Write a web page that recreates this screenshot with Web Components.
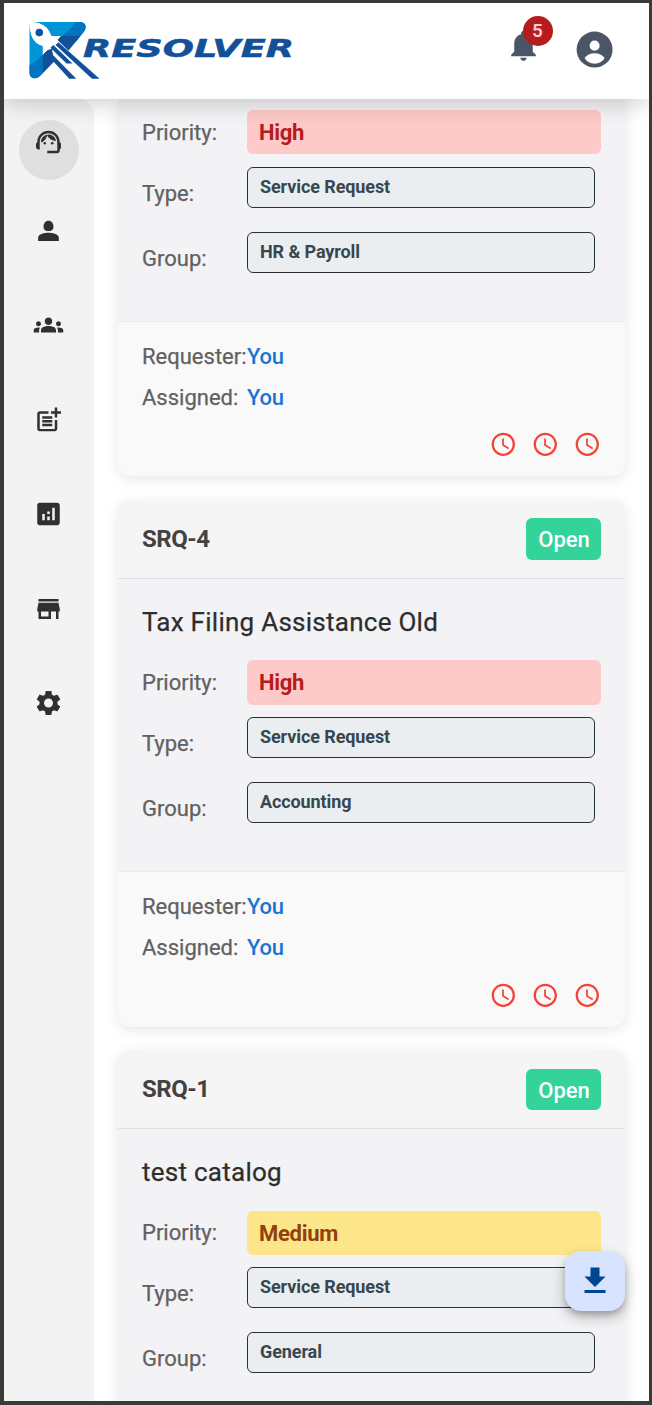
<!DOCTYPE html>
<html lang="en">
<head>
<meta charset="utf-8">
<title>Resolver</title>
<style>
html,body{margin:0;height:100%;overflow:hidden;background:#fff}
body{font-family:Roboto,"Liberation Sans",sans-serif}
</style>
</head>
<body>
<app-shell>
  <app-header slot="header" count="5"></app-header>
  <side-nav slot="nav"></side-nav>
  <ticket-card scrolled priority="High" type="Service Request" group="HR &amp; Payroll" requester="You" assigned="You"></ticket-card>
  <ticket-card code="SRQ-4" status="Open" heading="Tax Filing Assistance Old" priority="High" type="Service Request" group="Accounting" requester="You" assigned="You"></ticket-card>
  <ticket-card code="SRQ-1" status="Open" heading="test catalog" priority="Medium" type="Service Request" group="General"></ticket-card>
  <download-button slot="fab"></download-button>
</app-shell>
<script>
const ICONS = {
  agent: '<path d="M21 12.22C21 6.73 16.74 3 12 3c-4.69 0-9 3.65-9 9.28-.6.34-1 .98-1 1.72v2c0 1.1.9 2 2 2h1v-6.1c0-3.87 3.13-7 7-7s7 3.13 7 7V19h-8v2h8c1.1 0 2-.9 2-2v-1.22c.59-.31 1-.92 1-1.64v-2.3c0-.7-.41-1.31-1-1.62z"/><circle cx="9" cy="13" r="1"/><circle cx="15" cy="13" r="1"/><path d="M18 11.03C17.52 8.18 15.04 6 12.05 6c-3.03 0-6.29 2.51-6.03 6.45 2.47-1.01 4.33-3.21 4.86-5.89 1.31 2.63 4 4.44 7.12 4.47z"/>',
  person: '<path d="M12 12c2.300 0 4-1 4-3.500C16 6 14.500 3.800 12 3.800S8 6 8 8.500C8 11 9.700 12 12 12zm0 1.300c-2.670 0-8.300.900-8.300 4V20h16.600v-2.700c0-3.100-5.630-4-8.300-4z"/>',
  groups: '<path d="M12 12.75c1.63 0 3.07.39 4.24.9 1.08.48 1.76 1.56 1.76 2.73V18H6v-1.61c0-1.18.68-2.26 1.76-2.73 1.17-.52 2.61-.91 4.24-.91zM4 13c1.1 0 2-.9 2-2s-.9-2-2-2-2 .9-2 2 .9 2 2 2zm1.13 1.1c-.37-.06-.74-.1-1.13-.1-.99 0-1.93.21-2.78.58C.48 14.9 0 15.62 0 16.43V18h4.5v-1.61c0-.83.23-1.61.63-2.29zM20 13c1.1 0 2-.9 2-2s-.9-2-2-2-2 .9-2 2 .9 2 2 2zm4 3.43c0-.81-.48-1.53-1.22-1.85-.85-.37-1.79-.58-2.78-.58-.39 0-.76.04-1.13.1.4.68.63 1.46.63 2.29V18H24v-1.57zM12 6c1.66 0 3 1.34 3 3s-1.34 3-3 3-3-1.34-3-3 1.34-3 3-3z"/>',
  postAdd: '<path d="M17 19.22H5V7h7V5H5c-1.1 0-2 .9-2 2v12c0 1.1.9 2 2 2h12c1.1 0 2-.9 2-2v-7h-2v7.22z"/><path d="M19 2h-2v3h-3v2h3v3h2V7h3V5h-3V2zM7 9h8v2H7zm0 3h8v2H7zm0 3h8v2H7z"/>',
  analytics: '<path d="M19 3H5c-1.1 0-2 .9-2 2v14c0 1.1.9 2 2 2h14c1.1 0 2-.9 2-2V5c0-1.1-.9-2-2-2zM9 17H7v-5h2v5zm4 0h-2v-3h2v3zm0-5h-2v-2h2v2zm4 5h-2V7h2v10z"/>',
  store: '<path d="M20 4H4v2h16V4zm1 10v-2l-1-5H4l-1 5v2h1v6h10v-6h4v6h2v-6h1zm-9 4H6v-4h6v4z"/>',
  settings: '<path d="M19.14 12.94c.04-.3.06-.61.06-.94 0-.32-.02-.64-.07-.94l2.03-1.58c.18-.14.23-.41.12-.61l-1.92-3.32c-.12-.22-.37-.29-.59-.22l-2.39.96c-.5-.38-1.03-.7-1.62-.94l-.36-2.54c-.04-.24-.24-.41-.48-.41h-3.84c-.24 0-.43.17-.47.41l-.36 2.54c-.59.24-1.13.57-1.62.94l-2.39-.96c-.22-.08-.47 0-.59.22L2.74 8.87c-.12.21-.08.47.12.61l2.03 1.58c-.05.3-.09.63-.09.94s.02.64.07.94l-2.03 1.58c-.18.14-.23.41-.12.61l1.92 3.32c.12.22.37.29.59.22l2.39-.96c.5.38 1.03.7 1.62.94l.36 2.54c.05.24.24.41.48.41h3.84c.24 0 .44-.17.47-.41l.36-2.54c.59-.24 1.13-.56 1.62-.94l2.39.96c.22.08.47 0 .59-.22l1.92-3.32c.12-.22.07-.47-.12-.61l-2.01-1.58zM12 15.6c-1.98 0-3.6-1.62-3.6-3.6s1.62-3.6 3.6-3.6 3.6 1.62 3.6 3.6-1.62 3.6-3.6 3.6z"/>',
  clock: '<path d="M11.99 2C6.47 2 2 6.48 2 12s4.47 10 9.99 10C17.52 22 22 17.52 22 12S17.52 2 11.99 2zM12 20c-4.42 0-8-3.58-8-8s3.58-8 8-8 8 3.58 8 8-3.58 8-8 8z"/><path d="M12.5 7H11v6l5.25 3.15.75-1.23-4.5-2.67z"/>',
  bell: '<path d="M12 22c1.1 0 2-.9 2-2h-4c0 1.1.89 2 2 2zm6-6v-5c0-3.07-1.64-5.64-4.5-6.32V4c0-.83-.67-1.5-1.5-1.5s-1.5.67-1.5 1.5v.68C7.63 5.36 6 7.92 6 11v5l-2 2v1h16v-1l-2-2z"/>',
  account: '<path fill-rule="evenodd" d="M12 2a10 10 0 1 0 0 20 10 10 0 0 0 0-20zM12 7a2.8 2.8 0 1 1 0 5.6A2.8 2.8 0 0 1 12 7zM6.4 16.7C7.6 15 9.6 14.1 12 14.1s4.4.9 5.6 2.6C16.4 18.7 14.4 19.8 12 19.8s-4.4-1.1-5.6-3.1z"/>',
  download: '<path d="M5 20h14v-2H5v2zM19 9h-4V3H9v6H5l7 7 7-7z"/>'
};
function define(name, render) {
  customElements.define(name, class extends HTMLElement {
    connectedCallback() {
      if (this.shadowRoot) return;
      const t = document.createElement('template');
      t.innerHTML = render(this);
      this.attachShadow({mode: 'open'}).append(t.content.cloneNode(true));
    }
  });
}
const esc = s => (s || '').replace(/&/g, '&amp;').replace(/</g, '&lt;');

define('ui-icon', el => `
<style>:host{display:block;width:var(--size,30px);height:var(--size,30px);flex:none}svg{display:block;width:100%;height:100%;fill:currentColor}</style>
<svg viewBox="0 0 24 24">${ICONS[el.getAttribute('name')]}</svg>`);

define('app-shell', () => `
<style>
:host{display:grid;grid-template:96px 1fr/90px 1fr;box-sizing:border-box;width:652px;height:1405px;border:solid #3b3a39;border-width:3px 3px 4px 4px;position:relative;background:#fff;overflow:hidden}
.head{grid-column:1/3;z-index:2;box-shadow:0 4px 22px rgba(0,0,0,.2)}
.nav{min-height:0}
main{min-height:0;min-width:0;overflow:hidden;padding:0 24px;display:flex;flex-direction:column;gap:23.7px}
.fab{position:absolute;right:24px;bottom:90px;z-index:3}
</style>
<div class="head"><slot name="header"></slot></div>
<div class="nav"><slot name="nav"></slot></div>
<main><slot></slot></main>
<div class="fab"><slot name="fab"></slot></div>`);

define('brand-logo', () => `
<style>:host{display:block}svg{display:block}text{font:italic 700 25.5px "DejaVu Sans",sans-serif;fill:#12509a;stroke:#12509a;stroke-width:.5}</style>
<svg width="270" height="60" viewBox="28 20 270 60" role="img" aria-label="Resolver">
<defs><clipPath id="mark"><path d="M29.500 22H81Q88 23.500 84.500 31L68 51 58 45 52 50 54 61.500 40 76Q37 79 33 78Q29.500 77 29.500 73Z"/></clipPath></defs>
<g clip-path="url(#mark)">
<rect x="28" y="20" width="62" height="60" fill="#0095d8"/>
<path d="M77 20Q72 29 62 36L66 42H92V20ZM28 66Q36 62 42.700 55V82H28Z" fill="#0074bf"/>
<path d="M42.700 48V82H92V36H56V48Z" fill="#12509a"/>
</g>
<path d="M29 21.500Q40 21.500 46.500 27.500Q50 31 51.500 36H61L57.500 40 70 52 66 56 54 48 48 50 42.700 55V46Q35 44 32 37Q30 33 29 21.500Z" fill="#fff"/>
<circle cx="39.300" cy="32.600" r="3.800" fill="#12509a"/>
<path d="M55.500 45L58.500 42.200 99.500 78.700H92Z" fill="#12509a"/>
<path d="M50.500 47.700L53.300 45 72.500 63.500H66.500Z" fill="#12509a"/>
<path d="M44 53.500L48 50 76.300 78.700H69.300L52 60Z" fill="#12509a"/>
<text x="83" y="56.700" textLength="211" lengthAdjust="spacingAndGlyphs">RESOLVER</text>
</svg>`);

define('app-header', el => `
<style>
:host{display:flex;height:96px;box-sizing:border-box;background:#fff;align-items:flex-start;padding:17px 32.500px 0 24px}
brand-logo{margin-right:auto}
.bell{position:relative;margin:7.300px 31.300px 0 0;color:#4b5565;--size:37px}
.user{color:#4b5565;--size:43.2px;margin-top:8.300px}
.n{position:absolute;left:17.500px;top:-11.300px;width:30px;height:30px;border-radius:50%;background:#b71c1c;color:#ffcdd2;font:600 19px/30px Roboto,sans-serif;text-align:center}
</style>
<brand-logo></brand-logo>
<div class="bell"><ui-icon name="bell"></ui-icon><span class="n">${el.getAttribute('count')}</span></div>
<ui-icon class="user" name="account"></ui-icon>`);

define('side-nav', () => `
<style>
:host{display:flex;flex-direction:column;align-items:center;box-sizing:border-box;height:100%;background:#f3f3f3;padding:21px 0 0;color:#303030;border-radius:0 16px 0 0}
.active{width:60px;height:60px;border-radius:50%;background:#dfdfdf;box-sizing:border-box;padding:7px 14.500px;margin-bottom:36px}
.list{display:flex;flex-direction:column;gap:64.400px;margin-right:1px}
ui-icon{transform:translateX(-.500px)}
</style>
<div class="active"><ui-icon name="agent"></ui-icon></div>
<div class="list">${['person','groups','postAdd','analytics','store','settings'].map(n => `<ui-icon name="${n}"></ui-icon>`).join('')}</div>`);

define('field-row', el => {
  const k = el.getAttribute('kind');
  return `
<style>
:host{display:grid;grid-template-columns:105px 1fr;color:#616161;font-size:22px;line-height:26px;align-items:center;height:${k === 'chip' ? 44.4 : k === 'box' ? 53 : 41}px}
.label{padding-top:1.300px;-webkit-text-stroke:.25px currentColor}
.chip{height:44.400px;line-height:45px;border-radius:6px;padding-left:12px;font-weight:700;letter-spacing:-.3px;background:var(--bg);color:var(--fg)}
.box{align-self:start;box-sizing:border-box;height:41px;margin-right:6px;padding-left:12px;border:1px solid #263238;border-radius:6px;background:#eaeef1;color:#37474f;font-size:18px;font-weight:700;letter-spacing:-.1px;line-height:38px}
.link{padding-top:1.300px;color:#1976d2;font-weight:500;letter-spacing:-.2px}
</style>
<span class="label">${esc(el.getAttribute('label'))}</span><div class="${k}"><slot></slot></div>`;
});

define('ticket-card', el => {
  const a = n => esc(el.getAttribute(n)), p = a('priority');
  const top = el.hasAttribute('scrolled') ? '' : `<header><b>${a('code')}</b><span class="status">${a('status')}</span></header>`;
  const foot = a('requester') ? `<footer><field-row kind="link" label="Requester:">${a('requester')}</field-row>
<field-row kind="link" label="Assigned:">${a('assigned')}</field-row>
<div class="sla">${'<ui-icon name="clock"></ui-icon>'.repeat(3)}</div></footer>` : '';
  return `
<style>
:host{display:flex;flex-direction:column;flex:none;border-radius:13px;box-shadow:0 3px 14px rgba(0,0,0,.1);overflow:hidden;background:#f3f3f6}
:host([scrolled]){border-radius:0 0 13px 13px}
header{display:flex;justify-content:space-between;align-items:center;height:78.800px;box-sizing:border-box;padding:0 24px;background:#f5f5f5;border-bottom:1px solid #dedfe2;color:#424242;font-size:24px}
b{letter-spacing:-.450px}
.status{background:#34d399;color:#fff;font-size:22px;font-weight:500;height:41.400px;line-height:43.200px;border-radius:6px;width:75px;box-sizing:border-box;padding-left:1px;text-align:center}
.body{padding:26.900px 24px 36px}
:host([scrolled]) .body{padding-top:11.100px}
h2{margin:0 0 22.500px;font-size:26px;font-weight:400;line-height:32px;letter-spacing:.260px;color:#2d2d2d;-webkit-text-stroke:.25px currentColor}
.rows{display:grid;row-gap:12.200px;--bg:${p === 'High' ? '#fec9c9' : '#fde68a'};--fg:${p === 'High' ? '#b71c1c' : '#92400e'}}
footer{background:#f9f9f9;border-top:1px solid #ececee;padding:14px 24px 0;height:155.600px;box-sizing:border-box}
.sla{display:flex;justify-content:flex-end;gap:14px;margin-top:12.600px;color:#f44336;--size:28px}
.sla ui-icon{transform:translate(.3px,.3px)}
</style>
${top}
<div class="body">${a('heading') ? `<h2>${a('heading')}</h2>` : ''}<div class="rows">
<field-row kind="chip" label="Priority:">${p}</field-row>
<field-row kind="box" label="Type:">${a('type')}</field-row>
<field-row kind="box" label="Group:">${a('group')}</field-row></div></div>
${foot}`;
});

define('download-button', () => `
<style>:host{display:grid;place-items:center;width:60px;height:60px;border-radius:16px;background:#d7e3ff;color:#00458f;--size:36px;box-shadow:0 4px 6px -1px rgba(0,0,0,.2),0 6px 14px rgba(0,0,0,.25)}</style>
<ui-icon name="download"></ui-icon>`);
</script>
</body>
</html>
